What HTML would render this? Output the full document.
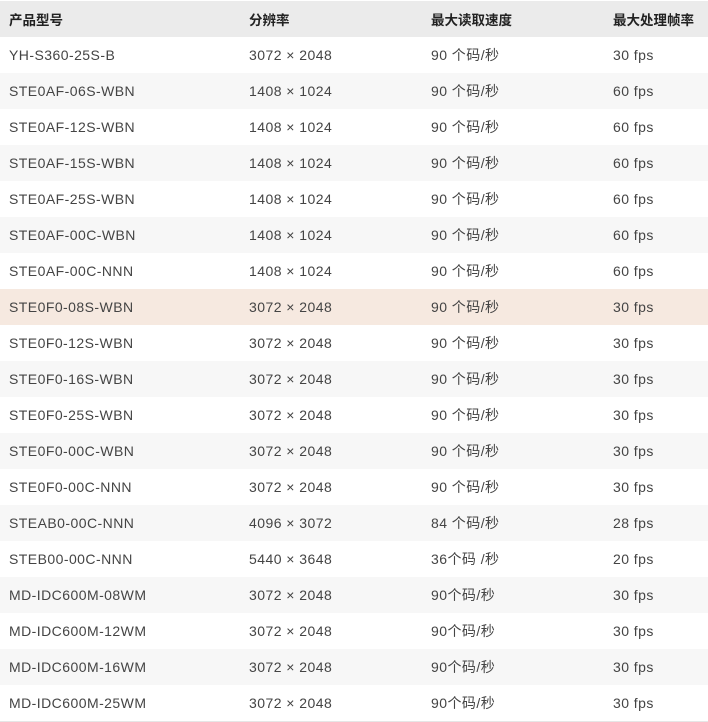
<!DOCTYPE html>
<html><head><meta charset="utf-8"><style>
body{margin:0;background:#fff;font-family:"Liberation Sans","Noto Sans CJK SC",sans-serif;font-size:14px;color:#444}
table{border-collapse:collapse;width:708px;margin-top:1px;table-layout:fixed}
td,th{height:36px;padding:0 0 0 9px;text-align:left;white-space:nowrap}
td{letter-spacing:0.45px}
th{background:#ebebeb;font-weight:bold;color:#222;font-size:13.5px}
tr:nth-child(even) td{background:#f7f7f7}
tr.h td{background:#f6e9e0!important}
tbody tr:last-child td{border-bottom:1px solid #e6e6e6}
</style></head><body>
<table>
<colgroup><col style="width:240px"><col style="width:182px"><col style="width:182px"><col style="width:104px"></colgroup>
<thead><tr><th>产品型号</th><th>分辨率</th><th>最大读取速度</th><th>最大处理帧率</th></tr></thead>
<tbody>
<tr><td>YH-S360-25S-B</td><td>3072 × 2048</td><td>90 个码/秒</td><td>30 fps</td></tr>
<tr><td>STE0AF-06S-WBN</td><td>1408 × 1024</td><td>90 个码/秒</td><td>60 fps</td></tr>
<tr><td>STE0AF-12S-WBN</td><td>1408 × 1024</td><td>90 个码/秒</td><td>60 fps</td></tr>
<tr><td>STE0AF-15S-WBN</td><td>1408 × 1024</td><td>90 个码/秒</td><td>60 fps</td></tr>
<tr><td>STE0AF-25S-WBN</td><td>1408 × 1024</td><td>90 个码/秒</td><td>60 fps</td></tr>
<tr><td>STE0AF-00C-WBN</td><td>1408 × 1024</td><td>90 个码/秒</td><td>60 fps</td></tr>
<tr><td>STE0AF-00C-NNN</td><td>1408 × 1024</td><td>90 个码/秒</td><td>60 fps</td></tr>
<tr class="h"><td>STE0F0-08S-WBN</td><td>3072 × 2048</td><td>90 个码/秒</td><td>30 fps</td></tr>
<tr><td>STE0F0-12S-WBN</td><td>3072 × 2048</td><td>90 个码/秒</td><td>30 fps</td></tr>
<tr><td>STE0F0-16S-WBN</td><td>3072 × 2048</td><td>90 个码/秒</td><td>30 fps</td></tr>
<tr><td>STE0F0-25S-WBN</td><td>3072 × 2048</td><td>90 个码/秒</td><td>30 fps</td></tr>
<tr><td>STE0F0-00C-WBN</td><td>3072 × 2048</td><td>90 个码/秒</td><td>30 fps</td></tr>
<tr><td>STE0F0-00C-NNN</td><td>3072 × 2048</td><td>90 个码/秒</td><td>30 fps</td></tr>
<tr><td>STEAB0-00C-NNN</td><td>4096 × 3072</td><td>84 个码/秒</td><td>28 fps</td></tr>
<tr><td>STEB00-00C-NNN</td><td>5440 × 3648</td><td>36个码 /秒</td><td>20 fps</td></tr>
<tr><td>MD-IDC600M-08WM</td><td>3072 × 2048</td><td>90个码/秒</td><td>30 fps</td></tr>
<tr><td>MD-IDC600M-12WM</td><td>3072 × 2048</td><td>90个码/秒</td><td>30 fps</td></tr>
<tr><td>MD-IDC600M-16WM</td><td>3072 × 2048</td><td>90个码/秒</td><td>30 fps</td></tr>
<tr><td>MD-IDC600M-25WM</td><td>3072 × 2048</td><td>90个码/秒</td><td>30 fps</td></tr>
</tbody></table>
</body></html>
